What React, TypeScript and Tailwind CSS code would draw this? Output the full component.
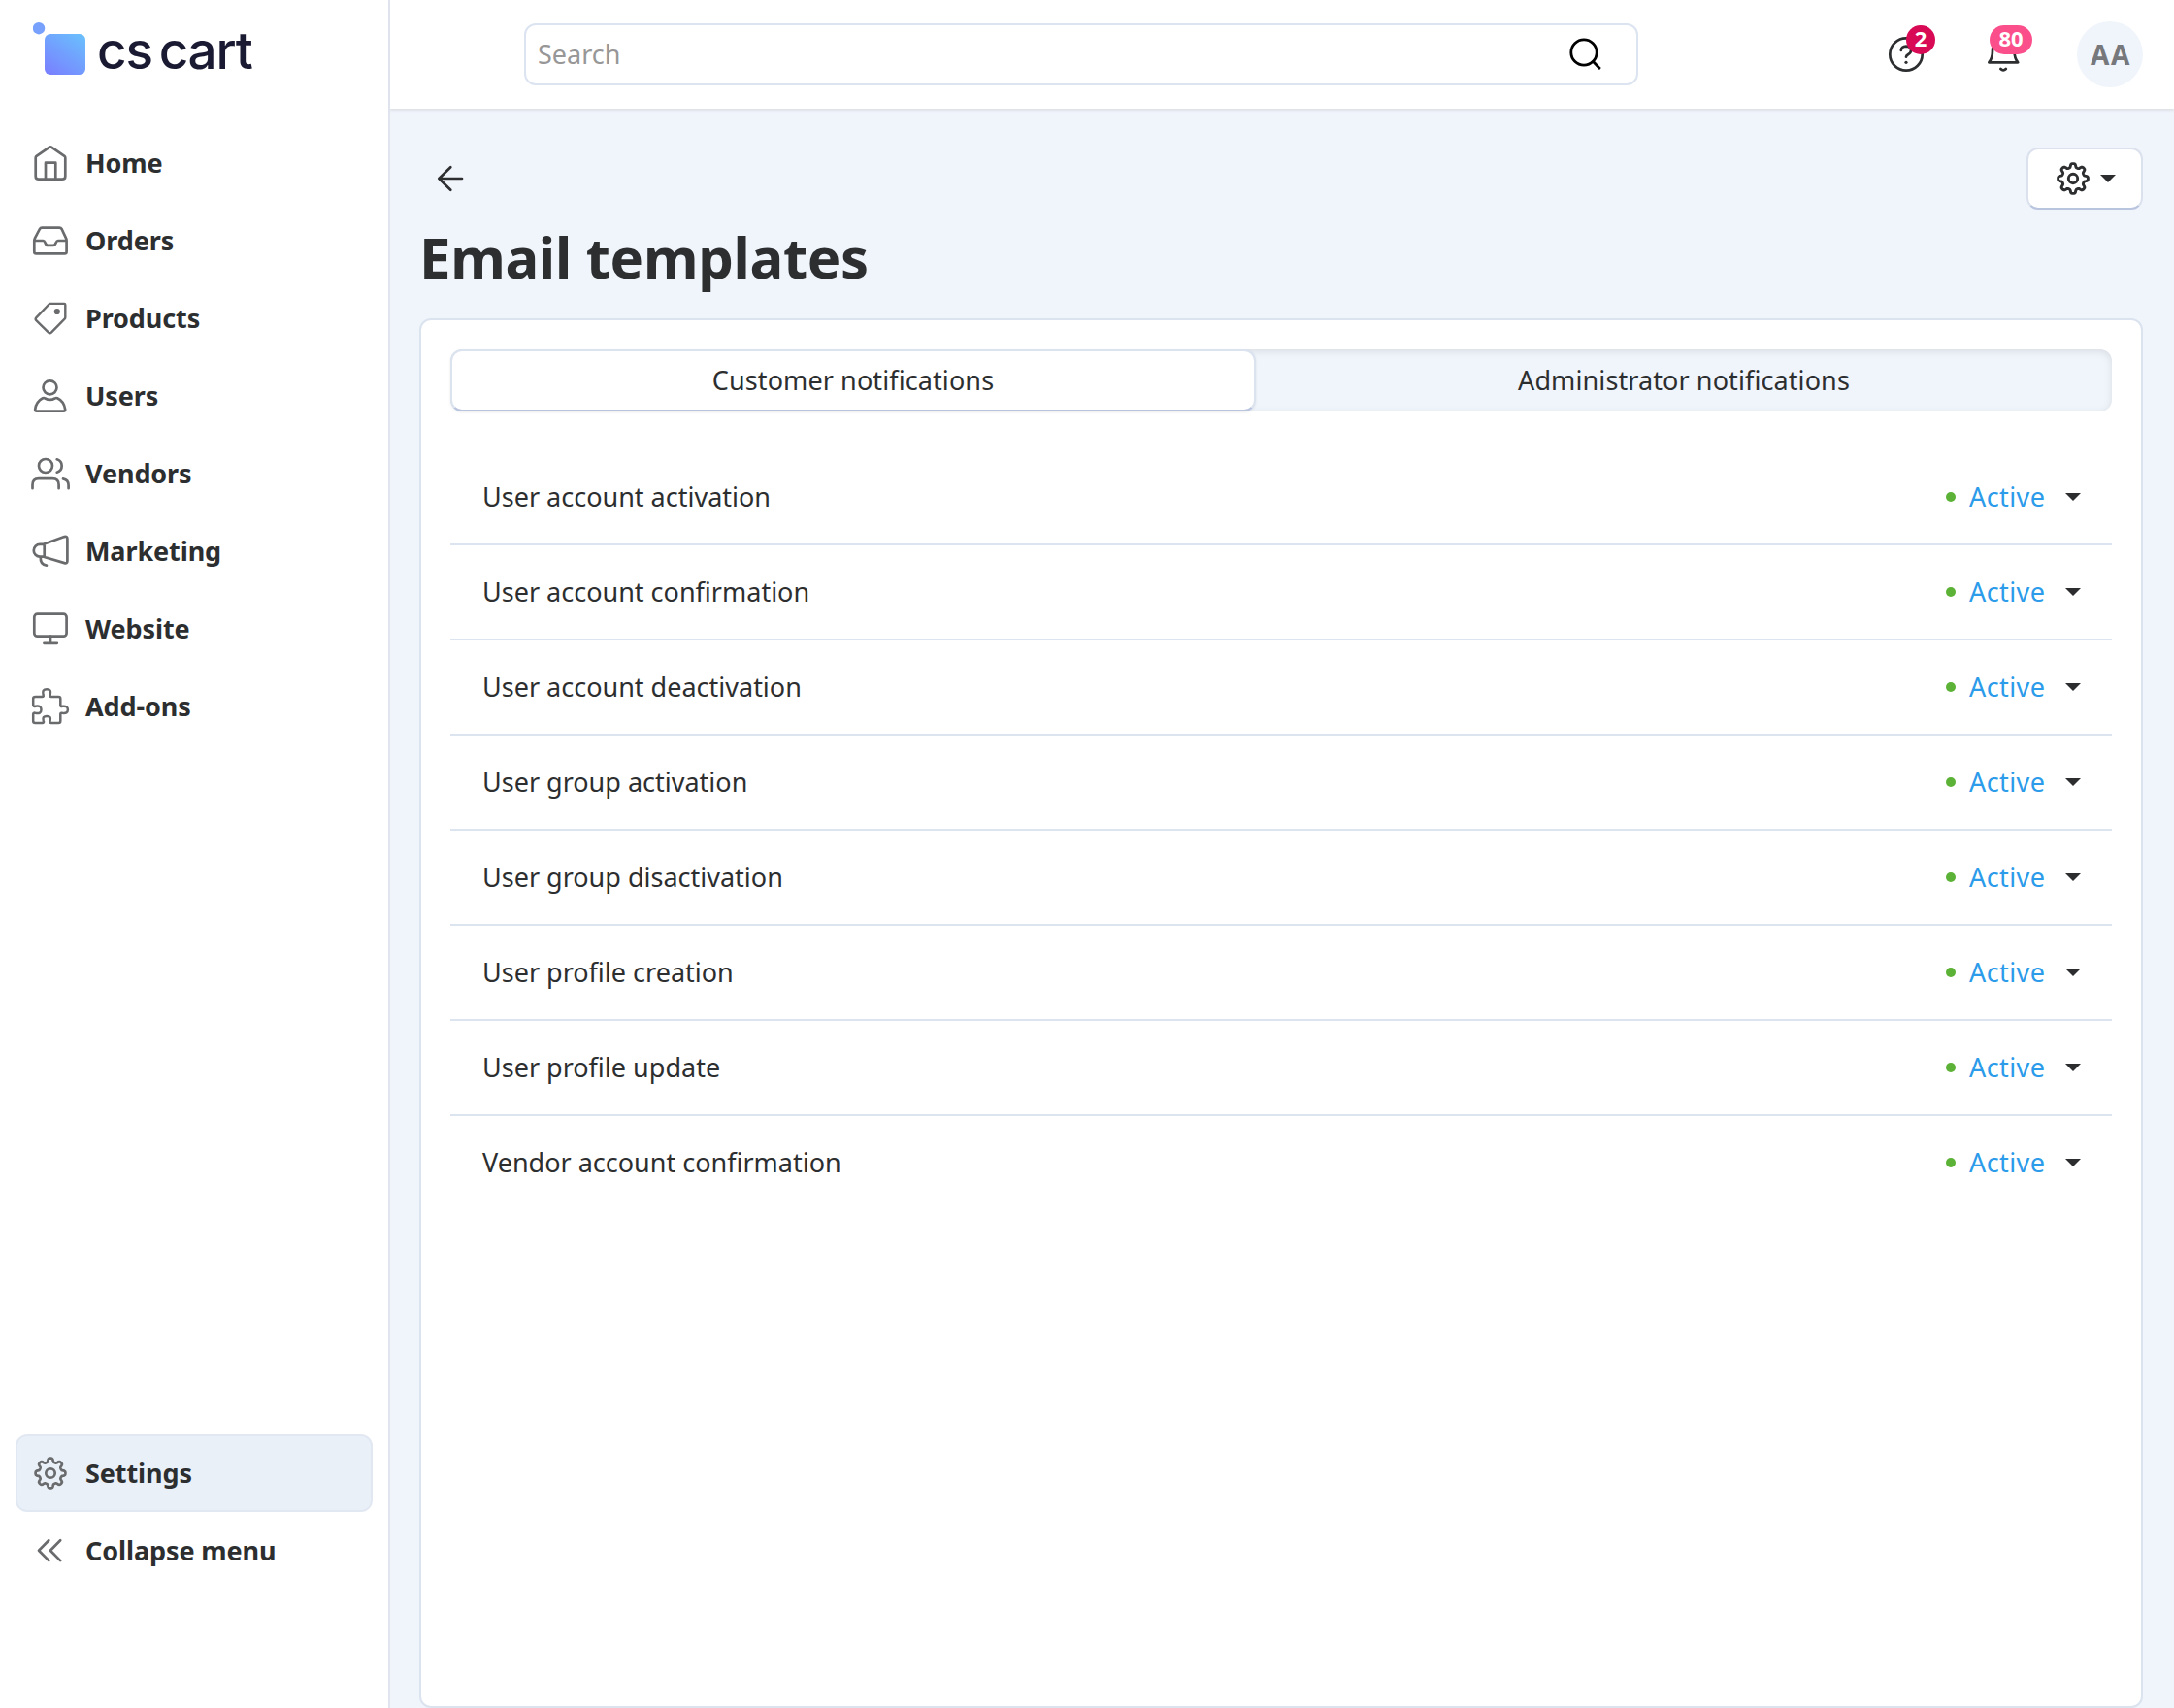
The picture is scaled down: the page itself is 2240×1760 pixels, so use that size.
import { clsx } from 'clsx';
import type { ReactNode } from 'react';

function Icon({ className, children }: { className?: string; children: ReactNode }) {
  return (
    <svg
      className={clsx('size-10 shrink-0 overflow-visible', className)}
      viewBox="0 0 40 40"
      fill="none"
      stroke="currentColor"
      strokeWidth="2.7"
      strokeLinecap="round"
      strokeLinejoin="round"
    >
      {children}
    </svg>
  );
}

// Eight lobed cog outline around the centre of a 40x40 box
function cogOutline() {
  const points: string[] = [];
  const steps = 192;
  for (let i = 0; i < steps; i++) {
    const a = (i / steps) * Math.PI * 2;
    const wave = Math.tanh(2 * Math.cos(8 * a)) / Math.tanh(2);
    const r = 13.5 + 1.9 * wave;
    points.push(`${(20 + r * Math.sin(a)).toFixed(2)} ${(20 - r * Math.cos(a)).toFixed(2)}`);
  }
  return `M${points.join('L')}Z`;
}

const cog = (
  <>
    <path d={cogOutline()} />
    <circle cx="20" cy="20" r="4.7" />
  </>
);

const menu: { label: string; icon: ReactNode }[] = [
  {
    label: 'Home',
    icon: (
      <>
        <path d="M18.6 3.8 5.6 12.8Q4.7 13.5 4.7 14.7V33.4Q4.7 36.7 8 36.7H32Q35.3 36.7 35.3 33.4V14.7Q35.3 13.5 34.4 12.8L21.4 3.8Q20 2.8 18.6 3.8Z" />
        <path d="M15 36V19.7H25.3V36" />
      </>
    ),
  },
  {
    label: 'Orders',
    icon: (
      <path d="M3.3 20V31.5Q3.3 33.4 5.3 33.4H34.6Q36.6 33.4 36.6 31.5V20Q36.6 18.6 36 17.4L31.6 8Q30.8 6.6 29.2 6.6H11.2Q9.6 6.6 8.9 8L4 17.4Q3.3 18.8 3.3 20H12.4Q13.7 20 14.6 22.2 15.5 24.9 17.2 24.9H22.8Q24.5 24.9 25.6 22.2 26.6 20 27.8 20H36.4" />
    ),
  },
  {
    label: 'Products',
    icon: (
      <>
        <path d="M19.8 4.9H34.2Q35.3 4.9 35.3 6V19Q35.3 20 34.6 20.7L20.9 34.7Q19.5 36 18 34.7L5.3 22.1Q4 20.8 5.3 19.3L18.5 5.5Q19.1 4.9 19.8 4.9Z" strokeWidth="2.4" />
        <circle cx="26.8" cy="13" r="1.9" fill="currentColor" strokeWidth="2.4" />
      </>
    ),
  },
  {
    label: 'Users',
    icon: (
      <>
        <circle cx="19.5" cy="11.3" r="7" />
        <path d="M12.1 22.3Q13.4 21.7 14.5 22.5 19.5 25.3 24.6 22.5 25.8 21.7 27.1 22.3 34 25.5 35.2 34 35.3 35.6 33.6 35.6H5.8Q4.1 35.6 4.2 34 5.2 25.8 12.1 22.3Z" />
      </>
    ),
  },
  {
    label: 'Vendors',
    icon: (
      <>
        <circle cx="15" cy="12" r="7" />
        <path d="M1.5 35.2V31.6Q1.5 25.2 8 25.2H22Q28.6 25.2 28.6 31.6V35.2M26.7 5.3A7 7 0 0 1 26.7 18.7M33 25.4Q38.6 26.4 38.6 32V35.2" />
      </>
    ),
  },
  {
    label: 'Marketing',
    icon: (
      <>
        <path d="M12.9 12.8 34.3 5.1Q37.4 4.2 37.4 6.9V30.2Q37.4 33 34.3 32.1L12.9 25.7H9.2A6.4 6.4 0 0 1 9.2 12.8ZM13.7 12.8V25.7" />
        <path d="M9.8 26.2Q9.3 34 16 34.6" />
      </>
    ),
  },
  {
    label: 'Website',
    icon: (
      <>
        <rect x="3.3" y="4.7" width="33.3" height="23" rx="3.2" />
        <path d="M20 27.7V34.8M13.4 34.8H26.8" />
      </>
    ),
  },
  {
    label: 'Add-ons',
    icon: (
      <path d="M4.5 10.1H11.4Q13.3 10.1 12.6 8.2 11 2.2 16.2 2.2 21.4 2.2 19.7 8.2 19 10.1 21 10.1H28.3Q30.3 10.1 30.3 12.1V18.8Q30.4 20.3 32.2 19.8 37.9 19 37.9 23.3 37.9 27.6 32.2 26.8 30.4 26.3 30.3 27.9V34.9Q30.3 36.9 28.3 36.9H20.5Q18.8 36.7 19.7 34.7 21 29.9 16.2 29.9 11.4 29.9 12.7 34.7 13.6 36.7 11.9 36.9H4.2Q2.2 36.9 2.2 34.9V28Q2.4 26.1 4.3 26.8 10.5 28.2 10.5 23.3 10.5 18.4 4.3 19.8 2.3 20.4 2.2 18.5V12.1Q2.2 10.1 4.5 10.1Z" strokeWidth="2.5" />
    ),
  },
];

const templates = [
  'User account activation',
  'User account confirmation',
  'User account deactivation',
  'User group activation',
  'User group disactivation',
  'User profile creation',
  'User profile update',
  'Vendor account confirmation',
];

function MenuItem({ label, icon, active }: { label: string; icon: ReactNode; active?: boolean }) {
  return (
    <a
      className={clsx(
        'flex h-20 items-center gap-4 rounded-xl border-2 px-3.5 text-[27px] font-bold tracking-[-0.1px]',
        active ? 'border-[#e2e8f2] bg-[#eaf0f8]' : 'border-transparent',
      )}
    >
      <Icon className="text-[#6a6b6d]">{icon}</Icon>
      {label}
    </a>
  );
}

function Logo() {
  return (
    <div className="flex h-32 items-start gap-3 pt-[23px] pl-[18px]">
      <svg className="h-[54px] w-[54px]" viewBox="0 0 54 54">
        <defs>
          <linearGradient id="logo" x1="0.1" y1="1" x2="0.8" y2="0">
            <stop offset="0" stopColor="#7980ff" />
            <stop offset="1" stopColor="#6bbcfd" />
          </linearGradient>
        </defs>
        <circle cx="6" cy="6.2" r="6.2" fill="#77a1fc" />
        <rect x="12" y="12" width="42" height="42" rx="6" fill="url(#logo)" />
      </svg>
      <span className="pt-0.5 font-['Inter',sans-serif] text-[53px] leading-[54px] font-medium tracking-[-1.2px] whitespace-nowrap text-[#1a1b33] [word-spacing:-6px]">
        cs cart
      </span>
    </div>
  );
}

function Caret() {
  return <span className="size-0 border-x-8 border-t-8 border-x-transparent border-t-[#2b2d2e]" />;
}

export default function App() {
  return (
    <div className="flex h-[1760px] w-[2240px] overflow-hidden bg-[#f0f4fb] font-['Noto_Sans',sans-serif] text-[27px] leading-10 text-[#2c2e2f]">
      {/* Sidebar */}
      <aside className="flex w-[402px] shrink-0 flex-col border-r-2 border-[#dfe4ee] bg-white px-4">
        <Logo />
        <nav className="flex flex-1 flex-col">
          {menu.map((item) => (
            <MenuItem key={item.label} {...item} />
          ))}
          <div className="mt-auto pb-[122px]">
            <MenuItem label="Settings" icon={cog} active />
            <MenuItem label="Collapse menu" icon={<path d="M18.3 9.2 8 19.7 18.3 30.1M30.2 9.2 19.9 19.7 30.2 30.1" />} />
          </div>
        </nav>
      </aside>

      <div className="flex min-w-0 flex-1 flex-col">
        {/* Top bar */}
        <header className="flex h-28 shrink-0 items-center bg-white pr-8 pl-[138px] shadow-[0_2px_2px_#dfe2e8]">
          <div className="flex h-16 w-[1148px] items-center justify-between rounded-xl border-2 border-[#dbe4f0] pr-8 pl-3 text-[#979797]">
            Search
            <Icon className="text-black">
              <circle cx="18" cy="18" r="13.2" strokeWidth="2.8" />
              <path d="M27.5 27.5 34 34.3" strokeWidth="2.8" />
            </Icon>
          </div>

          <div className="ml-auto flex items-center">
            <div className="relative">
              <Icon>
                <circle cx="20" cy="20" r="16.7" />
                <path d="M14.8 15.8Q15.3 11.8 20 11.6 25 11.8 25 16 25 18.7 22 20.2 20.2 21.2 20 22.6" />
                <circle cx="20" cy="28.3" r="1.6" fill="currentColor" stroke="none" />
              </Icon>
              <span className="absolute -top-2.5 left-5 flex h-[30px] w-[30px] justify-center rounded-full bg-[#d80955] text-[22px] leading-[26px] font-bold text-white">
                2
              </span>
            </div>
            <div className="relative ml-[60px]">
              <Icon>
                <path d="M5.3 28.3Q9 24 9 16.5 9 5 20.3 5 31.5 5 31.5 16.5 31.5 24 35.2 28.3Z" />
                <path d="M17.4 35Q20.1 37.8 22.8 35" />
              </Icon>
              <span className="absolute -top-2.5 left-1.5 flex h-[30px] w-11 justify-center rounded-full bg-[#fb4f8c] text-[22px] leading-[26px] font-bold text-white">
                80
              </span>
            </div>
            <div className="ml-14 flex size-[68px] items-center justify-center rounded-full bg-[#f0f4fb] pl-0.5 text-[28px] font-bold tracking-[1.5px] text-[#77787b]">
              AA
            </div>
          </div>
        </header>

        <main className="flex flex-1 flex-col pt-10 pr-8 pl-[30px]">
          <div className="flex h-16 items-center justify-between pl-3">
            <Icon>
              <path d="M8.3 20H32M20.3 8.3 8.3 20 20.3 31.7" />
            </Icon>
            <button className="flex h-16 w-[120px] items-center gap-2 rounded-xl border-2 border-[#dbe2ee] border-b-[#b9c5df] bg-white pl-[26px]">
              <Icon>
                <g strokeWidth="2.9">{cog}</g>
              </Icon>
              <Caret />
            </button>
          </div>
          <h1 className="mt-[17px] mb-[31px] text-[58px] leading-16 font-bold tracking-[-0.3px]">Email templates</h1>

          <section className="flex-1 rounded-xl border-2 border-[#dbe3ef] bg-white p-[30px]">
            <div className="flex h-16 rounded-xl bg-[#f0f4fb] text-center leading-[60px] tracking-[0.1px] shadow-[inset_0_2px_8px_rgba(0,0,0,0.1)]">
              <div className="w-[830px] rounded-xl border-2 border-[#dbe3ef] border-b-[#b9c5df] bg-white shadow-[0_1px_3px_rgba(0,0,0,0.08)]">
                Customer notifications
              </div>
              <div className="flex-1 pt-0.5">Administrator notifications</div>
            </div>

            <ul className="mt-10">
              {templates.map((name) => (
                <li key={name} className="flex h-[98px] items-center border-b-2 border-[#dbe4ef] pr-8 pl-[33px] last:border-transparent">
                  {name}
                  <span className="mr-3.5 ml-auto size-2.5 rounded-full bg-[#5cb236]" />
                  <span className="mr-5 w-[79px] tracking-[0.4px] text-[#2b9bea]">Active</span>
                  <Caret />
                </li>
              ))}
            </ul>
          </section>
        </main>
      </div>
    </div>
  );
}
